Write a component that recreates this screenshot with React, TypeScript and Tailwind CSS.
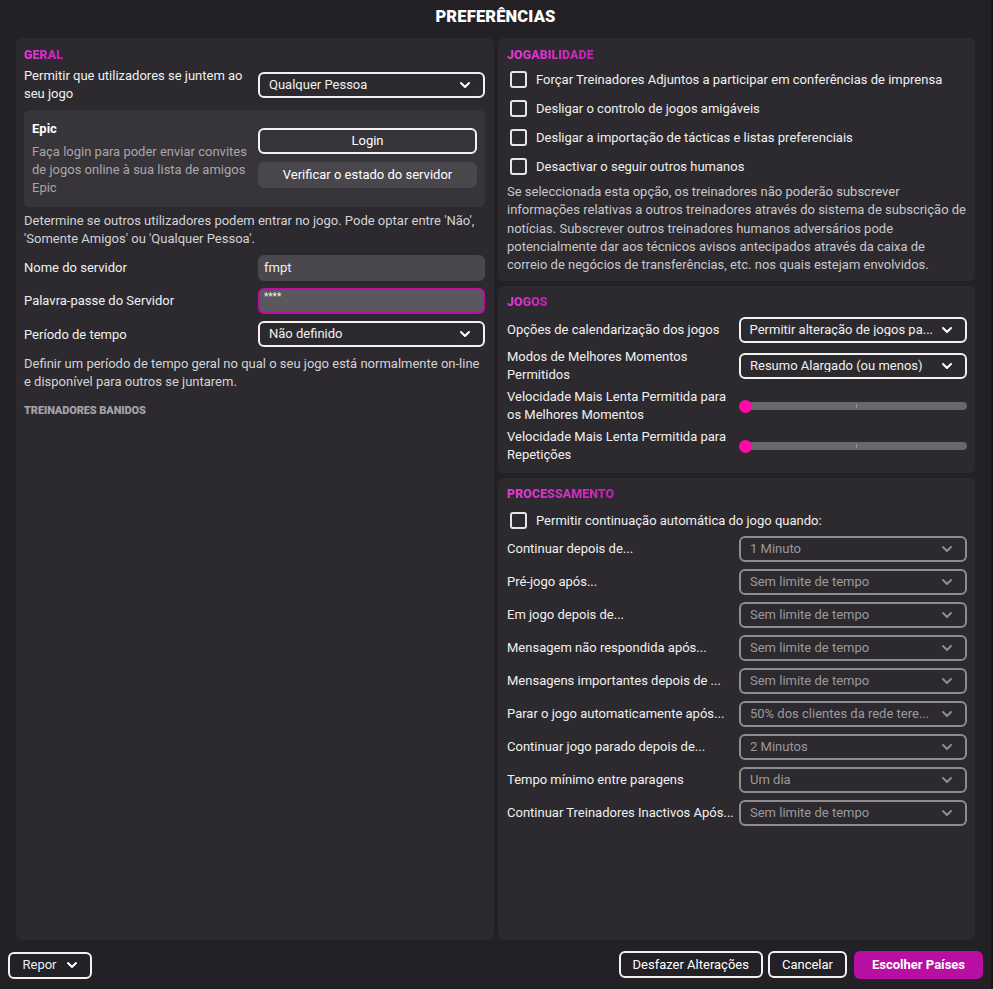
import type { ReactNode } from 'react';

const FONT = { fontFamily: 'Roboto, "Noto Sans", "Liberation Sans", sans-serif' };

function Chevron({ className = 'text-white' }: { className?: string }) {
  return (
    <svg width="12" height="8" viewBox="0 0 12 8" className={className}>
      <path d="M2 2 L6 6 L10 2" fill="none" stroke="currentColor" strokeWidth="2" strokeLinecap="round" strokeLinejoin="round" />
    </svg>
  );
}

function SectionTitle({ children }: { children: ReactNode }) {
  return (
    <h2 className="text-[12.5px] font-black uppercase leading-[15px] bg-gradient-to-r from-[#e23cd2] to-[#c21fb0] bg-clip-text text-transparent w-fit">
      {children}
    </h2>
  );
}

function Select({ value, disabled = false }: { value: string; disabled?: boolean }) {
  return (
    <div
      className={`h-[26px] flex items-center justify-between pl-[9px] pr-3 rounded-[6px] border-2 ${
        disabled ? 'border-[#8f8c90] text-[#9c999d]' : 'border-[#f2f2f2] text-[#f0f0f0]'
      }`}
    >
      <span className="truncate text-[13px] leading-none -mt-[2px]">{value}</span>
      <Chevron className={disabled ? 'text-[#8f8c90] shrink-0 ml-2' : 'text-white shrink-0 ml-2'} />
    </div>
  );
}

function Checkbox({ label }: { label: string }) {
  return (
    <label className="flex items-center gap-[9px] h-[29px]">
      <span className="w-[17px] h-[17px] rounded-[3px] border-2 border-[#e6e6e6] shrink-0" />
      <span className="text-[13px] text-[#f0f0f0]">{label}</span>
    </label>
  );
}

function Slider() {
  return (
    <div className="relative h-[26px] flex items-center">
      <div className="w-full h-[8px] rounded-full bg-[#6b686c] relative">
        <div className="absolute left-1/2 top-[2px] w-px h-[4px] bg-[#9a979b]" />
      </div>
      <div className="absolute left-[-6px] w-[13px] h-[13px] rounded-full bg-[#ff0aa8]" />
    </div>
  );
}

const processRows: [string, string][] = [
  ['Continuar depois de...', '1 Minuto'],
  ['Pré-jogo após...', 'Sem limite de tempo'],
  ['Em jogo depois de...', 'Sem limite de tempo'],
  ['Mensagem não respondida após...', 'Sem limite de tempo'],
  ['Mensagens importantes depois de ...', 'Sem limite de tempo'],
  ['Parar o jogo automaticamente após...', '50% dos clientes da rede tere...'],
  ['Continuar jogo parado depois de...', '2 Minutos'],
  ['Tempo mínimo entre paragens', 'Um dia'],
  ['Continuar Treinadores Inactivos Após...', 'Sem limite de tempo'],
];

export default function App() {
  return (
    <div style={FONT} className="w-[993px] h-[989px] bg-[#18161b] flex text-[#f0f0f0]">
      <div className="w-[991px] h-full bg-[#232126] flex flex-col">
        {/* Title */}
        <div className="h-[38px] flex items-center justify-center">
          <h1 className="text-[16.5px] font-black tracking-[0.01em] text-white -mt-[3px]">PREFERÊNCIAS</h1>
        </div>

        {/* Panels */}
        <div className="flex gap-[4px] pl-[16px] pr-[16px] h-[902px]">
          {/* Left: Geral */}
          <section className="w-[478px] h-full rounded-[6px] bg-[#2c2a2f] pl-[8px] pr-[9px] pt-[9px]">
            <SectionTitle>GERAL</SectionTitle>

            <div className="flex items-center mt-[5px]">
              <div className="w-[234px] text-[13px] leading-[18px]">Permitir que utilizadores se juntem ao seu jogo</div>
              <div className="flex-1">
                <Select value="Qualquer Pessoa" />
              </div>
            </div>

            <div className="mt-[7px] rounded-[6px] bg-[#37353a] flex pl-[8px] pr-[8px] pt-[8px] h-[97px]">
              <div className="w-[226px] pt-[2px]">
                <div className="text-[13px] font-bold text-white leading-[18px]">Epic</div>
                <p className="text-[13px] leading-[18px] text-[#a9a6aa] mt-[5px]">
                  Faça login para poder enviar convites de jogos online à sua lista de amigos Epic
                </p>
              </div>
              <div className="flex-1 pt-[10px] flex flex-col gap-[8px]">
                <button className="h-[26px] rounded-[6px] border-2 border-[#f2f2f2] text-[13px] text-white">Login</button>
                <button className="h-[26px] rounded-[6px] bg-[#49464c] text-[13px] text-white">Verificar o estado do servidor</button>
              </div>
            </div>

            <p className="mt-[5px] text-[13px] leading-[18px] text-[#d4d2d5]">
              Determine se outros utilizadores podem entrar no jogo. Pode optar entre 'Não', 'Somente Amigos' ou 'Qualquer Pessoa'.
            </p>

            <div className="flex items-center mt-[7px]">
              <div className="w-[234px] text-[13px]">Nome do servidor</div>
              <div className="flex-1 h-[26px] rounded-[6px] bg-[#4a474d] flex items-center px-[6px] text-[13px]">fmpt</div>
            </div>
            <div className="flex items-center mt-[7px]">
              <div className="w-[234px] text-[13px]">Palavra-passe do Servidor</div>
              <div className="flex-1 h-[26px] rounded-[6px] bg-[#5b585d] border-2 border-[#c40aa6] flex items-start px-[4px] pt-[1px] text-[10px] leading-[12px]">****</div>
            </div>
            <div className="flex items-center mt-[7px]">
              <div className="w-[234px] text-[13px] mt-[2px]">Período de tempo</div>
              <div className="flex-1">
                <Select value="Não definido" />
              </div>
            </div>

            <p className="mt-[8px] text-[13px] leading-[18px] text-[#d4d2d5]">
              Definir um período de tempo geral no qual o seu jogo está normalmente on-line e disponível para outros se juntarem.
            </p>

            <div className="mt-[12px] text-[11px] font-black text-[#a4a2a8] tracking-[-0.01em]">TREINADORES BANIDOS</div>
          </section>

          {/* Right column */}
          <div className="w-[477px] h-full flex flex-col gap-[5px]">
            {/* Jogabilidade */}
            <section className="h-[243px] rounded-[6px] bg-[#2c2a2f] pl-[9px] pr-[4px] pt-[9px]">
              <SectionTitle>JOGABILIDADE</SectionTitle>
              <div className="mt-[3px] pl-[3px]">
                <Checkbox label="Forçar Treinadores Adjuntos a participar em conferências de imprensa" />
                <Checkbox label="Desligar o controlo de jogos amigáveis" />
                <Checkbox label="Desligar a importação de tácticas e listas preferenciais" />
                <Checkbox label="Desactivar o seguir outros humanos" />
              </div>
              <p className="mt-[2px] text-[13px] leading-[18.3px] text-[#c9c7ca] whitespace-nowrap">
                Se seleccionada esta opção, os treinadores não poderão subscrever
                <br />
                informações relativas a outros treinadores através do sistema de subscrição de
                <br />
                notícias. Subscrever outros treinadores humanos adversários pode
                <br />
                potencialmente dar aos técnicos avisos antecipados através da caixa de
                <br />
                correio de negócios de transferências, etc. nos quais estejam envolvidos.
              </p>
            </section>

            {/* Jogos */}
            <section className="h-[187px] rounded-[6px] bg-[#2c2a2f] pl-[9px] pr-[8px] pt-[8px]">
              <SectionTitle>JOGOS</SectionTitle>
              <div className="mt-[8px] flex flex-col gap-[4px]">
                <div className="flex items-center">
                  <div className="w-[232px] text-[13px] leading-[18px]">Opções de calendarização dos jogos</div>
                  <div className="flex-1"><Select value="Permitir alteração de jogos pa..." /></div>
                </div>
                <div className="flex items-center mt-[1px]">
                  <div className="w-[232px] text-[13px] leading-[18px]">Modos de Melhores Momentos Permitidos</div>
                  <div className="flex-1"><Select value="Resumo Alargado (ou menos)" /></div>
                </div>
                <div className="flex items-center">
                  <div className="w-[232px] text-[13px] leading-[18px]">Velocidade Mais Lenta Permitida para os Melhores Momentos</div>
                  <div className="flex-1 pl-[6px]"><Slider /></div>
                </div>
                <div className="flex items-center">
                  <div className="w-[232px] text-[13px] leading-[18px]">Velocidade Mais Lenta Permitida para Repetições</div>
                  <div className="flex-1 pl-[6px]"><Slider /></div>
                </div>
              </div>
            </section>

            {/* Processamento */}
            <section className="flex-1 rounded-[6px] bg-[#2c2a2f] pl-[9px] pr-[8px] pt-[8px]">
              <SectionTitle>PROCESSAMENTO</SectionTitle>
              <div className="mt-[5px] pl-[3px]">
                <Checkbox label="Permitir continuação automática do jogo quando:" />
              </div>
              <div className="mt-[1px] flex flex-col gap-[7px]">
                {processRows.map(([label, value]) => (
                  <div key={label} className="flex items-center">
                    <div className="w-[232px] text-[13px] truncate pr-[1px]">{label}</div>
                    <div className="flex-1"><Select value={value} disabled /></div>
                  </div>
                ))}
              </div>
            </section>
          </div>
        </div>

        {/* Footer */}
        <div className="flex-1 flex items-center pl-[8px] pr-[8px] pt-[1px]">
          <button className="h-[27px] w-[84px] rounded-[6px] border-2 border-[#f2f2f2] flex items-center justify-center gap-[9px] text-[13px] text-[#e8eefc]">
            Repor <Chevron />
          </button>
          <div className="ml-auto flex gap-[5px]">
            <button className="h-[27px] px-[12px] rounded-[6px] border-2 border-[#f2f2f2] text-[13px] text-white">Desfazer Alterações</button>
            <button className="h-[27px] px-[12px] rounded-[6px] border-2 border-[#f2f2f2] text-[13px] text-white">Cancelar</button>
            <button className="h-[28px] w-[129px] ml-[2px] rounded-[6px] bg-[#b80ea1] text-[13px] font-bold text-white">Escolher Países</button>
          </div>
        </div>
      </div>
    </div>
  );
}
